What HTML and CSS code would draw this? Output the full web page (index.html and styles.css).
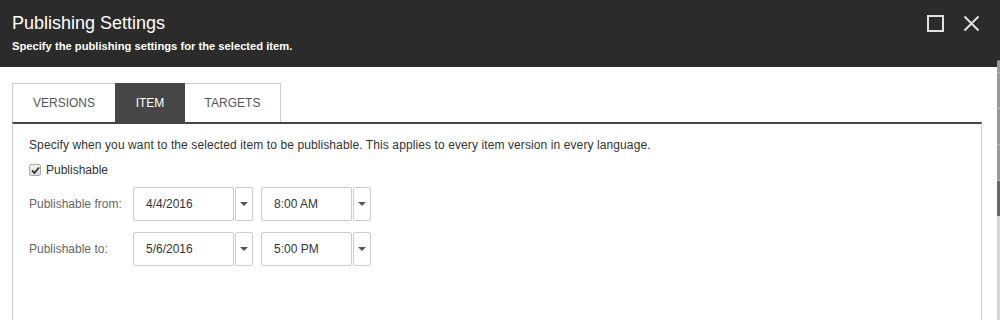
FILE: index.html
```html
<!DOCTYPE html>
<html lang="en">
<head>
  <meta charset="UTF-8">
  <title>Publishing Settings</title>
  <link rel="stylesheet" href="styles.css">
</head>
<body>
  <div class="frame">
    <div class="dialog">
      <!-- Dialog header -->
      <div class="header">
        <div class="header-text">
          <h1>Publishing Settings</h1>
          <p>Specify the publishing settings for the selected item.</p>
        </div>
        <div class="header-buttons">
          <svg width="17" height="17" viewBox="0 0 17 17"><rect x="1" y="1" width="15" height="15" fill="none" stroke="#e0e0e0" stroke-width="2"/></svg>
          <svg width="17" height="17" viewBox="0 0 17 17"><path d="M1.5 1.5 L15.5 15.5 M15.5 1.5 L1.5 15.5" stroke="#e0e0e0" stroke-width="2"/></svg>
        </div>
      </div>

      <!-- Tabs -->
      <div class="tabs">
        <div class="tab">VERSIONS</div>
        <div class="tab active">ITEM</div>
        <div class="tab">TARGETS</div>
      </div>

      <div class="panel">
        <p class="intro">Specify when you want to the selected item to be publishable. This applies to every item version in every language.</p>
        <label class="check-row">
          <span class="checkbox"><svg width="9" height="9" viewBox="0 0 9 9"><path d="M1 4.5 L3.5 7 L8 1.5" fill="none" stroke="#333" stroke-width="1.8"/></svg></span>
          Publishable
        </label>

        <div class="field-row">
          <span class="field-label">Publishable from:</span>
          <div class="combo date"><span class="combo-value">4/4/2016</span><span class="combo-btn"><i class="arrow"></i></span></div>
          <div class="combo time"><span class="combo-value">8:00 AM</span><span class="combo-btn"><i class="arrow"></i></span></div>
        </div>
        <div class="field-row">
          <span class="field-label">Publishable to:</span>
          <div class="combo date"><span class="combo-value">5/6/2016</span><span class="combo-btn"><i class="arrow"></i></span></div>
          <div class="combo time"><span class="combo-value">5:00 PM</span><span class="combo-btn"><i class="arrow"></i></span></div>
        </div>
      </div>
    </div>

    <!-- page scrollbar strip behind the dialog -->
    <div class="strip">
      <div class="seg s-dark"></div>
      <div class="seg s-mid"></div>
      <div class="seg s-grey"></div>
      <div class="seg s-grey"></div>
      <div class="seg s-grey"></div>
      <div class="seg s-deep"></div>
      <div class="seg s-light"></div>
    </div>
  </div>
</body>
</html>
```

FILE: styles.css
```css
body {
  margin: 0;
  background: #fff;
  font-family: Arial, "Liberation Sans", sans-serif;
  color: #333;
}
.frame {
  display: flex;
  height: 320px;
  overflow: hidden;
}
.dialog {
  width: 997px;
  display: flex;
  flex-direction: column;
}
.header {
  background-color: #2b2b2b;
  height: 67px;
  box-sizing: border-box;
  padding: 13px 17px 0 12px;
  display: flex;
  justify-content: space-between;
  color: #fff;
}
.header h1 {
  margin: 0;
  font-size: 18px;
  font-weight: normal;
  line-height: 21px;
}
.header p {
  margin: 5px 0 0;
  font-size: 11.2px;
  font-weight: bold;
  line-height: 14px;
}
.header-buttons {
  display: flex;
  gap: 19px;
  padding-top: 2px;
}
/* Tabs */
.tabs {
  display: flex;
  margin: 16px 0 0 12px;
}
.tab {
  box-sizing: border-box;
  height: 39px;
  line-height: 38px;
  border: 1px solid #ccc;
  border-bottom: none;
  font-size: 12px;
  color: #555;
  text-align: center;
}
.tab:first-child { width: 103px; border-right: none; }
.tab.active {
  width: 70px;
  background-color: #464646;
  border-color: #464646;
  color: #fff;
}
.tab:last-child { width: 96px; border-left: none; }
.panel {
  flex: 1;
  margin: 0 15px 0 12px;
  border: 1px solid #ccc;
  border-top: 2px solid #464646;
  border-bottom: none;
  padding: 13px 16px 0;
}
.intro {
  margin: 0;
  font-size: 12px;
  line-height: 16px;
  letter-spacing: 0.1px;
}
.check-row {
  display: flex;
  align-items: center;
  gap: 5px;
  margin-top: 9px;
  font-size: 12px;
  line-height: 16px;
}
.checkbox {
  width: 12px;
  height: 12px;
  box-sizing: border-box;
  border: 1px solid #a8a8a8;
  border-radius: 2px;
  background: linear-gradient(#f4f4f4, #dcdcdc);
  display: flex;
  align-items: center;
  justify-content: center;
}
.field-row {
  display: flex;
  align-items: center;
  margin-top: 11px;
}
.check-row + .field-row { margin-top: 9px; }
.field-label {
  width: 104px;
  font-size: 12px;
  color: #666;
}
.combo {
  display: flex;
  height: 34px;
}
.combo.date { width: 120px; margin-right: 8px; }
.combo.time { width: 110px; }
.combo-value {
  flex: 1;
  border: 1px solid #ccc;
  border-radius: 2px;
  padding-left: 12px;
  font-size: 12px;
  line-height: 32px;
  color: #333;
}
.combo-btn {
  width: 16px;
  margin-left: 1px;
  border: 1px solid #ccc;
  border-radius: 2px;
  display: flex;
  align-items: center;
  justify-content: center;
}
.arrow {
  width: 0;
  height: 0;
  border-left: 4px solid transparent;
  border-right: 4px solid transparent;
  border-top: 4px solid #555;
}
/* Right strip */
.strip {
  width: 3px;
  display: flex;
  flex-direction: column;
}
.seg { border-bottom: 1px solid #bbb; }
.s-dark { height: 60px; background: #2b2b2b; border-bottom-color: #777; }
.s-mid { height: 11px; background: #999; }
.s-grey { height: 35px; background: #9a9a9a; }
.s-deep { height: 35px; background: #666; border-bottom: none; }
.s-light { flex: 1; background: #d4d4d4; border-bottom: none; }
```
